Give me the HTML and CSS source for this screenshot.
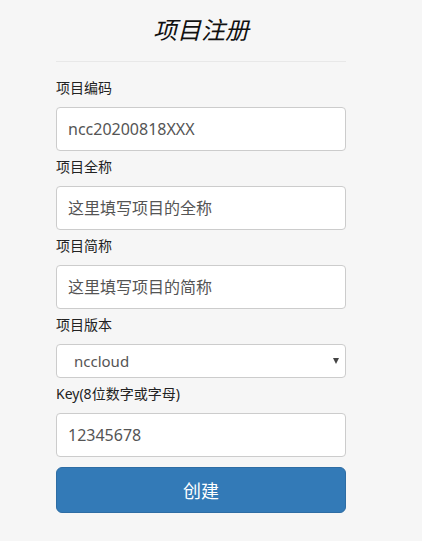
FILE: index.html
```html
<!DOCTYPE html>
<html lang="zh">
<head>
<meta charset="utf-8">
<title>项目注册</title>
<link rel="stylesheet" href="styles.css">
</head>
<body>
<div class="container">
  <h2 class="title">项目注册</h2>
  <hr class="divider">
  <form class="form">
    <label class="label">项目编码</label>
    <input class="field" type="text" value="ncc20200818XXX">
    <label class="label">项目全称</label>
    <input class="field" type="text" placeholder="这里填写项目的全称">
    <label class="label">项目简称</label>
    <input class="field" type="text" placeholder="这里填写项目的简称">
    <label class="label">项目版本</label>
    <div class="select-wrap">
      <select class="select">
        <option>nccloud</option>
      </select>
    </div>
    <label class="label">Key(8位数字或字母)</label>
    <input class="field" type="text" value="12345678">
    <button class="btn" type="button">创建</button>
  </form>
</div>
</body>
</html>
```

FILE: styles.css
```css
html, body {
  margin: 0;
  padding: 0;
  background: #f6f6f6;
}
body {
  font-family: "Noto Sans", "Noto Sans CJK SC", sans-serif;
  color: #222;
}
.container {
  width: 290px;
  margin-left: 56px;
  display: flex;
  flex-direction: column;
}
.title {
  margin: 0;
  padding-top: 13px;
  height: 34px;
  line-height: 34px;
  text-align: center;
  font-size: 24px;
  font-weight: normal;
  font-style: italic;
  color: #111;
}
.divider {
  margin: 14px 0 0 0;
  border: 0;
  border-top: 1px solid #e8e8e8;
  height: 0;
}
.form {
  display: flex;
  flex-direction: column;
  padding-top: 16px;
}
.label {
  display: block;
  height: 20px;
  line-height: 20px;
  font-size: 14px;
  color: #222;
  margin-top: 6px;
  margin-bottom: 9px;
}
.label:first-child {
  margin-top: 0;
}
.field {
  box-sizing: border-box;
  width: 100%;
  height: 44px;
  margin: 0;
  padding: 0 11px;
  border: 1px solid #cccccc;
  border-radius: 4px;
  background: #fff;
  font-family: "Noto Sans", "Noto Sans CJK SC", sans-serif;
  font-size: 16px;
  color: #555;
  outline: none;
}
.field::placeholder {
  color: #555;
  opacity: 1;
}
.select-wrap {
  position: relative;
  height: 34px;
}
.select-wrap::after {
  content: "";
  position: absolute;
  right: 7px;
  top: 14px;
  border-left: 3.5px solid transparent;
  border-right: 3.5px solid transparent;
  border-top: 6px solid #444;
}
.select {
  box-sizing: border-box;
  width: 100%;
  height: 34px;
  margin: 0;
  padding: 0 0 0 17px;
  border: 1px solid #cccccc;
  border-radius: 4px;
  background: #fff;
  -webkit-appearance: none;
  appearance: none;
  font-family: "Noto Sans", "Noto Sans CJK SC", sans-serif;
  font-size: 15px;
  color: #555;
  outline: none;
}
.btn {
  margin-top: 10px;
  height: 46px;
  width: 100%;
  border: 1px solid #2e6da4;
  border-radius: 6px;
  background: #337ab7;
  color: #fff;
  font-family: "Noto Sans CJK SC", sans-serif;
  font-size: 18px;
  cursor: pointer;
}
```
